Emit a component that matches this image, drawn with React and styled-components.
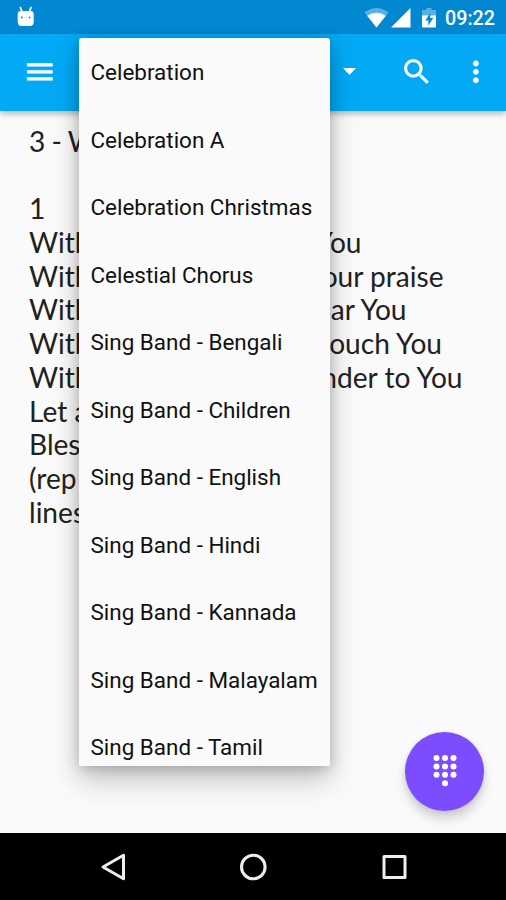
import React from 'react'
import styled, { createGlobalStyle } from 'styled-components'

// Styles
const GlobalStyle = createGlobalStyle`
    * { box-sizing: border-box; }
    html, body { margin: 0; padding: 0; background: #fafafa; }
    svg { display: block; flex: none; overflow: visible; }
`

const Screen = styled.div`
    position: relative;
    display: flex;
    flex-direction: column;
    width: 506px;
    height: 900px;
    overflow: hidden;
    background: #fafafa;
    font-family: Roboto, 'Liberation Sans', sans-serif;
`

const StatusBar = styled.header`
    display: flex;
    align-items: center;
    flex: none;
    height: 34px;
    padding: 0 11px 0 17px;
    background: #0288d1;
`

const StatusIcons = styled.div`
    display: flex;
    align-items: center;
    margin-left: auto;
    padding-top: 1px;
`

const Gap = styled.span`
    width: ${({ $w }) => $w}px;
`

const Clock = styled.span`
    width: 50px;
    margin-left: 9px;
    padding-top: 1px;
    color: #fff;
    font-size: 19.7px;
    font-weight: 500;
    line-height: 33px;
    white-space: nowrap;
`

const Toolbar = styled.nav`
    position: relative;
    display: flex;
    align-items: center;
    flex: none;
    height: 77px;
    padding: 0 13.5px 2px 23px;
    background: #03a9f4;
    box-shadow: 0 3px 6px rgba(0, 0, 0, 0.26);
`

const Actions = styled.div`
    display: flex;
    align-items: center;
    margin-left: auto;
`

const IconButton = styled.button`
    display: flex;
    padding: 0;
    margin: 0 0 0 ${({ $ml }) => $ml || 0}px;
    border: 0;
    background: none;
    color: #fff;
`

const Song = styled.main`
    flex: 1;
    padding: 13.5px 0 0 29px;
    color: #212121;
    font-family: Lato, sans-serif;
    font-size: 28.1px;
    line-height: 33.75px;
`

const Line = styled.div`
    display: flex;
    justify-content: space-between;
    width: ${({ $w }) => ($w ? `${$w}px` : 'auto')};
    height: 33.75px;
    letter-spacing: ${({ $tight }) => ($tight ? '-0.5px' : 'normal')};
    white-space: nowrap;
`

const Menu = styled.ul`
    position: absolute;
    top: 38px;
    left: 79px;
    width: 250.5px;
    height: 727.5px;
    margin: 0;
    padding: 0;
    overflow: hidden;
    list-style: none;
    border-radius: 3px 3px 1px 1px;
    background: #fafafa;
    box-shadow: 0 14px 28px rgba(0, 0, 0, 0.22), 0 2px 14px rgba(0, 0, 0, 0.2);
`

const MenuItem = styled.li`
    height: 67.5px;
    padding-left: 11.5px;
    color: #111;
    font-size: 22.45px;
    line-height: 68.2px;
    white-space: nowrap;
`

const Fab = styled.button`
    position: absolute;
    right: 22px;
    bottom: 89.5px;
    display: flex;
    align-items: center;
    justify-content: center;
    width: 79px;
    height: 79px;
    padding: 0;
    border: 0;
    border-radius: 50%;
    background: #7c4dff;
    box-shadow: 0 8px 11px rgba(0, 0, 0, 0.17), 0 1px 4px rgba(0, 0, 0, 0.1);
`

const NavBar = styled.footer`
    display: flex;
    align-items: center;
    justify-content: space-between;
    flex: none;
    height: 67px;
    padding: 0 98px 0 99px;
    background: #000;
`

const lines = [
    { head: '3 - W', tight: true },
    { head: '' },
    { head: '1' },
    { head: 'With', tail: 'You', w: 332.5 },
    { head: 'With', tail: 'Your praise', w: 414.5 },
    { head: 'With', tail: 'hear You', w: 377.5 },
    { head: 'With', tail: 'touch You', w: 413 },
    { head: 'With', tail: 'surrender to You', w: 433.5 },
    { head: 'Let a' },
    { head: 'Bless' },
    { head: '(rep' },
    { head: 'lines' },
]

const books = [
    'Celebration',
    'Celebration A',
    'Celebration Christmas',
    'Celestial Chorus',
    'Sing Band - Bengali',
    'Sing Band - Children',
    'Sing Band - English',
    'Sing Band - Hindi',
    'Sing Band - Kannada',
    'Sing Band - Malayalam',
    'Sing Band - Tamil',
]

// Icons
const Robot = () => (
    <svg width="18" height="21" viewBox="0 0 18 21">
        <path d="M3.4 0.5 5 5M14 0.5 12.4 5" stroke="#fff" strokeWidth="1.7" strokeLinecap="round" />
        <path d="M4 4h9.5q3.2 0 3.2 3v7.5q0 4.5-4 4.5h-8q-4 0-4-4.5V7q0-3 3.3-3z" fill="#fff" />
        <circle cx="4.8" cy="10.5" r="0.9" fill="#0288d1" />
        <circle cx="12.6" cy="10.5" r="0.9" fill="#0288d1" />
        <path d="M7.3 10.8h2.8" stroke="#b9def3" strokeWidth="0.8" />
    </svg>
)

const Wifi = () => (
    <svg width="25" height="20" viewBox="0 0 25 20">
        <path d="M0.5 4.5Q12.5-4.5 24.5 4.5L12.5 19.5z" fill="#fff" opacity="0.35" />
        <path d="M3.2 7.8Q12.5 1.7 21.8 7.8L12.5 19.5z" fill="#fff" />
    </svg>
)

const Signal = () => (
    <svg width="20" height="20" viewBox="0 0 20 20">
        <path d="M19.5 0v19.5H0z" fill="#fff" />
    </svg>
)

const Battery = () => (
    <svg width="14" height="20" viewBox="0 0 14 20">
        <path d="M4.5 0h5v2H13q1 0 1 1v5H0V3q0-1 1-1h3.5z" fill="#fff" opacity="0.35" />
        <path d="M0 7.5h14V18.5q0 1-1 1H1q-1 0-1-1z" fill="#fff" />
        <path d="M8.3 5 3.3 12.5h3V17.5l5-7.5h-3z" fill="#0288d1" />
    </svg>
)

const MdIcon = ({ d, bold = 0 }) => (
    <svg width="33.7" height="33.7" viewBox="0 0 24 24" fill="currentColor" stroke="currentColor" strokeWidth={bold}>
        <path d={d} />
    </svg>
)

const dots = [0, 1, 2].flatMap((r) => [0, 1, 2].map((c) => [c, r])).concat([[1, 3]])

const Dialpad = () => (
    <svg width="24" height="32" viewBox="0 0 24 32" fill="#fff">
        {dots.map(([c, r]) => (
            <circle key={`${c}-${r}`} cx={3.5 + c * 8.5} cy={3 + r * 8.4} r="3" />
        ))}
    </svg>
)

const App = () => {
    return (
        <Screen>
            <GlobalStyle />
            <StatusBar>
                <Robot />
                <StatusIcons>
                    <Wifi />
                    <Gap $w={2.5} />
                    <Signal />
                    <Gap $w={11} />
                    <Battery />
                    <Clock>09:22</Clock>
                </StatusIcons>
            </StatusBar>
            <Toolbar>
                <IconButton>
                    <MdIcon bold={0.4} d="M3 18h18v-2H3v2zm0-5h18v-2H3v2zm0-7v2h18V6H3z" />
                </IconButton>
                <Actions>
                    <svg width="13" height="7" viewBox="0 0 13 7">
                        <path d="M0 0h13L6.5 7z" fill="#fff" />
                    </svg>
                    <IconButton $ml={44}>
                        <MdIcon bold={0.2} d="M15.5 14h-.79l-.28-.27C15.41 12.59 16 11.11 16 9.5 16 5.91 13.09 3 9.5 3S3 5.91 3 9.5 5.91 16 9.5 16c1.61 0 3.09-.59 4.23-1.57l.27.28v.79l5 4.99L20.49 19l-4.99-5zm-6 0C7.01 14 5 11.99 5 9.5S7.01 5 9.5 5 14 7.01 14 9.5 11.99 14 9.5 14z" />
                    </IconButton>
                    <IconButton $ml={25.3}>
                        <MdIcon bold={0.2} d="M12 8c1.1 0 2-.9 2-2s-.9-2-2-2-2 .9-2 2 .9 2 2 2zm0 2c-1.1 0-2 .9-2 2s.9 2 2 2 2-.9 2-2-.9-2-2-2zm0 6c-1.1 0-2 .9-2 2s.9 2 2 2 2-.9 2-2-.9-2-2-2z" />
                    </IconButton>
                </Actions>
            </Toolbar>
            <Song>
                {lines.map(({ head, tail, w, tight }, i) => (
                    <Line key={i} $w={w} $tight={tight}>
                        <span>{head}</span>
                        {tail && <span>{tail}</span>}
                    </Line>
                ))}
            </Song>
            <NavBar>
                <svg width="27" height="28" viewBox="0 0 27 28" fill="none" stroke="#eee" strokeWidth="3" strokeLinejoin="round">
                    <path d="M24.5 2.3v23.4L4 14z" />
                </svg>
                <svg width="28" height="28" viewBox="0 0 28 28" fill="none" stroke="#eee" strokeWidth="3">
                    <circle cx="14.3" cy="14" r="11.8" />
                </svg>
                <svg width="28" height="28" viewBox="0 0 28 28" fill="none" stroke="#eee" strokeWidth="3" strokeLinejoin="round">
                    <path d="M4 3.5h21v21H4z" />
                </svg>
            </NavBar>
            <Menu>
                {books.map((book) => (
                    <MenuItem key={book}>{book}</MenuItem>
                ))}
            </Menu>
            <Fab>
                <Dialpad />
            </Fab>
        </Screen>
    )
}

export default App
